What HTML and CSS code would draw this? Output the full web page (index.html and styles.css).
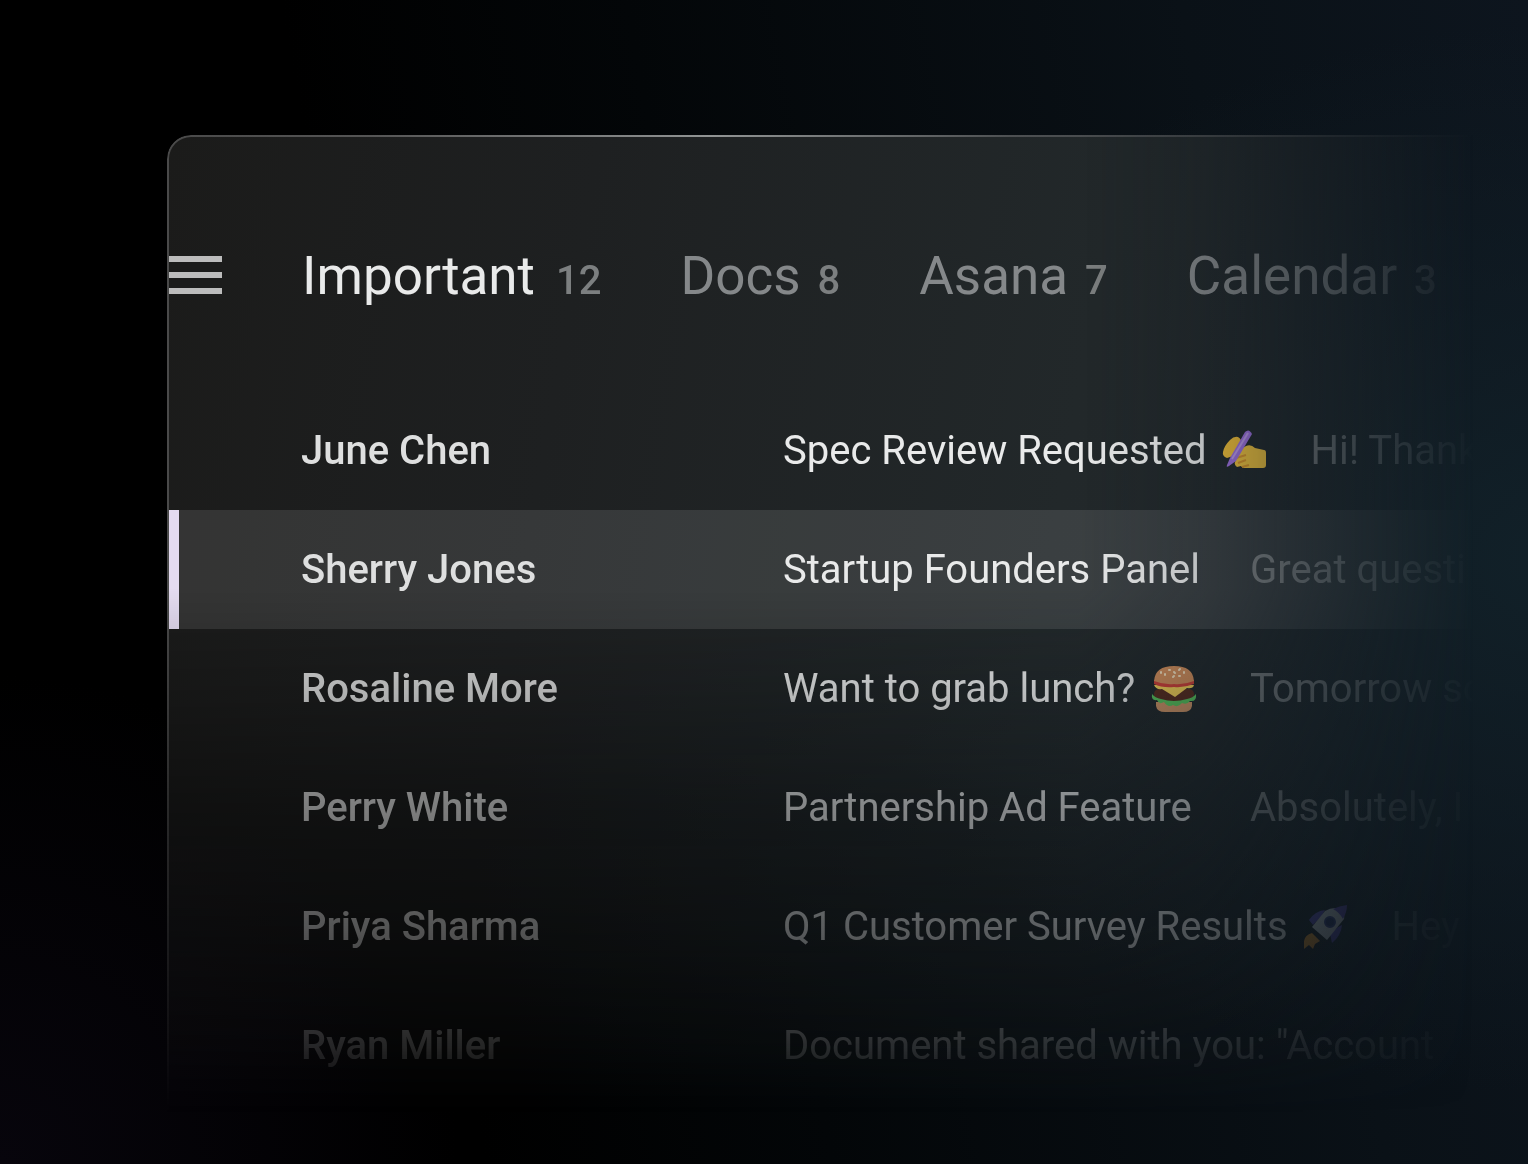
FILE: index.html
```html
<!DOCTYPE html>
<html lang="en">
<head>
<meta charset="utf-8">
<meta name="viewport" content="width=device-width, initial-scale=1">
<title>Inbox</title>
<link rel="stylesheet" href="styles.css">
</head>
<body>
<main class="panel">
  <header class="topbar">
    <button class="menu" type="button" aria-label="Open menu"><span class="bar"></span><span class="bar"></span><span class="bar"></span></button>
    <nav class="tabs" aria-label="Splits">
      <a class="tab active" href="#important">Important <span class="count">12</span></a>
      <a class="tab" href="#docs">Docs <span class="count">8</span></a>
      <a class="tab" href="#asana">Asana <span class="count">7</span></a>
      <a class="tab" href="#calendar">Calendar <span class="count">3</span></a>
    </nav>
  </header>
  <ul class="messages">
    <li><a class="message" href="#m1">
      <span class="sender">June Chen</span>
      <span class="subject">Spec Review Requested
        <svg class="emoji" viewBox="0 0 44 44" aria-hidden="true">
          <path d="M1 23Q2 17 8 11Q12 7 16 8Q20 10 19 15L18 21L11 27L5 29Q0 27 1 23Z" fill="#fcc63a"/>
          <path d="M11 28Q16 21 24 17Q29 15 33 19L42 21Q44 21 44 24V36Q44 39 41 39H24Q20 39 19 37L15 38Q11 35 14 31Z" fill="#fccb40"/>
          <path d="M14 29L24 26M16 34L24 31M20 38L27 36" stroke="#e39c2c" stroke-width="2" fill="none"/>
          <path d="M23 3Q27 -1 30 5L14 32L7 37Q4 39 5 36L8 29Z" fill="#a675ea"/>
          <path d="M26 4L10 30" stroke="#c6a0f6" stroke-width="2"/>
        </svg></span>
      <span class="preview">Hi! Thank</span></a></li>
    <li><a class="message selected" href="#m2" aria-current="true">
      <span class="sender">Sherry Jones</span>
      <span class="subject">Startup Founders Panel</span>
      <span class="preview">Great questi</span></a></li>
    <li><a class="message" href="#m3">
      <span class="sender">Rosaline More</span>
      <span class="subject">Want to grab lunch?
        <svg class="emoji burger" viewBox="0 0 44 48" aria-hidden="true">
          <path d="M4 37H40V41Q39 47 31 47H13Q5 47 4 41Z" fill="#d6996a"/>
          <rect x="2" y="24" width="40" height="12" rx="5" fill="#5b2d20"/>
          <path d="M0 29Q-1 36 5 35Q7 40 12 37Q16 43 21 40Q26 43 30 38Q35 40 38 36Q45 37 44 29Q41 33 35 34Q22 38 9 34Q3 33 0 29Z" fill="#5ccb60"/>
          <path d="M2 20H42Q41 24 35 23L23 32L10 24Q4 25 2 20Z" fill="#ffd95a"/>
          <path d="M2 15H42V19Q32 23 22 22Q10 23 2 19Z" fill="#d8423a"/>
          <path d="M2 16Q3 1 22 1Q41 1 42 16Q32 20 22 19Q12 20 2 16Z" fill="#dc945f"/>
          <path d="M9 7L9 8M13 9L13 10M17 5L18 5M22 7L23 8M27 5L28 4M32 8L32 7M27 11L28 11M21 12L22 11" stroke="#ffebc8" stroke-width="2" stroke-linecap="round"/>
        </svg></span>
      <span class="preview">Tomorrow so</span></a></li>
    <li><a class="message" href="#m4">
      <span class="sender">Perry White</span>
      <span class="subject">Partnership Ad Feature</span>
      <span class="preview">Absolutely, I</span></a></li>
    <li><a class="message" href="#m5">
      <span class="sender">Priya Sharma</span>
      <span class="subject">Q1 Customer Survey Results
        <svg class="emoji" viewBox="0 0 44 44" aria-hidden="true">
          <path d="M6 15Q12 6 22 5L18 12L10 20ZM39 20Q38 31 29 38L27 29L35 22Z" fill="#6a5ad0"/>
          <path d="M9 28L17 36L12 39L10 44L6 40L1 44L1 36Q2 30 9 28Z" fill="#ffab3a"/>
          <path d="M9 22L22 6Q30 1 38 4Q42 10 41 14L24 35Z" fill="#e2e7ee"/>
          <path d="M30 4Q36 1 44 0Q44 7 40 14Q36 7 30 4Z" fill="#6d58cc"/>
          <circle cx="27" cy="17" r="5" fill="#333d78" stroke="#464e98" stroke-width="2"/>
        </svg></span>
      <span class="preview">Hey</span></a></li>
    <li><a class="message" href="#m6">
      <span class="sender">Ryan Miller</span>
      <span class="subject">Document shared with you: "Account</span></a></li>
  </ul>
</main>
</body>
</html>
```
FILE: styles.css
```css
* { box-sizing: border-box; }

body {
  margin: 0;
  min-height: 100vh;
  padding: 135px 0 0 167px;
  display: flex;
  overflow: hidden;
  font-family: Roboto, "Liberation Sans", sans-serif;
  font-size: 40px;
  line-height: 48px;
  color: #e9eaea;
  background:
    radial-gradient(ellipse 46% 46% at 102% 48%, rgba(18, 34, 42, .9), rgba(18, 32, 40, .6) 40%, transparent),
    radial-gradient(ellipse 30% 42% at 0% 100%, #07050c, transparent),
    linear-gradient(80deg, #000 28%, #030608 48%, #0a1117 80%, #0d151e 100%);
}

a { color: inherit; text-decoration: none; }

.panel {
  flex: 1;
  min-width: 0;
  overflow: hidden;
  border: 2px solid transparent;
  border-right: 0;
  border-radius: 24px 0 0 0;
  background:
    linear-gradient(100deg, #1b1b1a, #1e2021 28%, #22282a 62%, #252b31) padding-box,
    linear-gradient(90deg, #4a4a4a, #555 15%, #919494 40%, #4d5052 62%, #33383c) border-box;
  mask-image:
    linear-gradient(90deg, #000 67%, rgba(0, 0, 0, .8) 76%, rgba(0, 0, 0, .44) 85%, rgba(0, 0, 0, .2) 91%, rgba(0, 0, 0, .06) 95%, transparent 96%),
    linear-gradient(180deg, #000 44%, rgba(0, 0, 0, .8) 54%, rgba(0, 0, 0, .57) 65%, rgba(0, 0, 0, .38) 77%, rgba(0, 0, 0, .18) 88%, transparent 95%);
  mask-composite: intersect;
}

.topbar {
  display: flex;
  align-items: center;
  gap: 80px;
  height: 276px;
}

.menu {
  display: flex;
  flex-direction: column;
  gap: 10px;
  width: 53px;
  padding: 0;
  border: 0;
  background: none;
}

.bar { width: 100%; height: 6px; background: #bcbcbc; }

.tabs {
  display: flex;
  gap: 79px;
  padding-top: 6px;
  font-size: 53px;
  line-height: 64px;
}

.tab {
  display: flex;
  align-items: baseline;
  gap: 17px;
  white-space: nowrap;
  color: #85888a;
}

.tab.active { gap: 21px; color: #e9eaea; }

.count { font-size: 40px; font-weight: 500; color: #7c7f80; }

.messages { margin: -22px 0 0; padding: 0; list-style: none; }

.message {
  display: grid;
  grid-template-columns: 482px max-content max-content;
  align-items: center;
  height: 119px;
  padding-left: 132px;
  white-space: nowrap;
}

.message.selected {
  background: rgba(255, 255, 255, .11);
  box-shadow: inset 10px 0 #e4dbf0;
}

.sender { font-weight: 500; color: #dedfdf; }

.subject {
  display: flex;
  align-items: center;
  gap: 15px;
  min-width: 422px;
}

.preview { margin-left: 45px; color: #85888a; }

.emoji { width: 44px; height: 44px; }

.emoji.burger { width: 48px; height: 48px; }
```
